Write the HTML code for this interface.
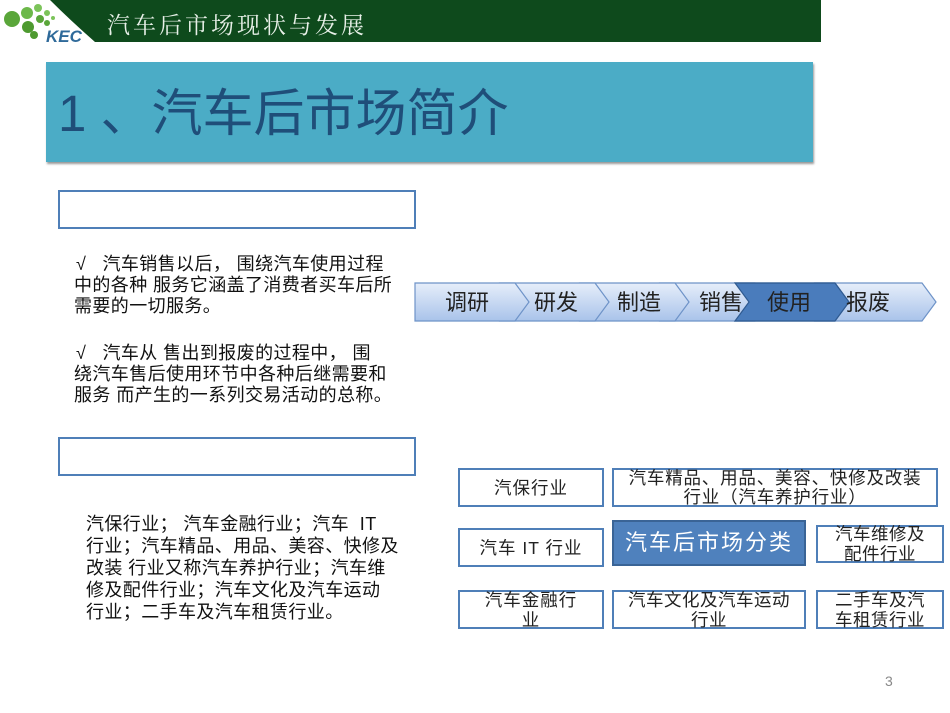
<!DOCTYPE html>
<html><head><meta charset="utf-8"><style>
*{margin:0;padding:0;box-sizing:border-box}
body{width:950px;height:713px;background:#fff;position:relative;overflow:hidden;font-family:"Liberation Sans","Noto Sans CJK SC",sans-serif}
.a{position:absolute;white-space:nowrap}
.t{font-size:18px;color:#111;line-height:21px;letter-spacing:0.4px}
.box{position:absolute;border:2px solid #4f7fb8;background:#fff;display:flex;align-items:center;justify-content:center;text-align:center;font-size:17.5px;line-height:20px;color:#222;letter-spacing:1px}
</style></head><body>
<div class="a" style="left:0;top:0;width:821px;height:42px;background:#0e4a1c"></div>
<svg class="a" style="left:0;top:0" width="100" height="46">
<path d="M0 0 H50 Q70 20 95 42 H0Z" fill="#fff"/>
<circle cx="12" cy="19" r="8" fill="#5aa63a"/><circle cx="27" cy="13" r="6" fill="#6cb84a"/><circle cx="28" cy="27" r="6" fill="#4e9a30"/>
<circle cx="38" cy="8" r="4" fill="#7cc45a"/><circle cx="40" cy="19" r="4" fill="#5aa63a"/><circle cx="34" cy="35" r="4" fill="#4e9a30"/>
<circle cx="47" cy="13" r="3" fill="#7cc45a"/><circle cx="47" cy="23" r="3" fill="#5aa63a"/><circle cx="53" cy="18" r="2" fill="#7cc45a"/>
<text x="46" y="42" font-size="17" font-style="italic" font-weight="bold" fill="#2f6a9a" font-family="Liberation Sans">KEC</text>
</svg>
<div class="a" style="left:107px;top:7px;font-size:23px;color:#e8f0e8;letter-spacing:3px;font-family:'Liberation Sans','Noto Serif CJK SC',serif">汽车后市场现状与发展</div>
<div class="a" style="left:46px;top:62px;width:767px;height:100px;background:#4bacc6;box-shadow:1px 2px 2px #999"></div>
<div class="a" style="left:58px;top:83px;font-size:51px;color:#1f4e79;line-height:62px">1 、汽车后市场简介</div>
<div class="a" style="left:58px;top:190px;width:358px;height:39px;border:2px solid #4f7fb8"></div>
<div class="a" style="left:58px;top:437px;width:358px;height:39px;border:2px solid #4f7fb8"></div>
<div class="a t" style="left:76px;top:254px">√&nbsp;&nbsp;&nbsp;汽车销售以后，&nbsp;围绕汽车使用过程</div>
<div class="a t" style="left:74px;top:275px">中的各种&nbsp;服务它涵盖了消费者买车后所</div>
<div class="a t" style="left:74px;top:296px">需要的一切服务。</div>
<div class="a t" style="left:76px;top:343px">√&nbsp;&nbsp;&nbsp;汽车从&nbsp;售出到报废的过程中，&nbsp;围</div>
<div class="a t" style="left:74px;top:364px">绕汽车售后使用环节中各种后继需要和</div>
<div class="a t" style="left:74px;top:385px">服务&nbsp;而产生的一系列交易活动的总称。</div>
<div class="a t" style="left:86px;top:513px;line-height:22px">汽保行业；&nbsp;汽车金融行业；汽车&nbsp;&nbsp;IT<br>行业；汽车精品、用品、美容、快修及<br>改装&nbsp;行业又称汽车养护行业；汽车维<br>修及配件行业；汽车文化及汽车运动<br>行业；二手车及汽车租赁行业。</div>
<svg class="a" style="left:410px;top:278px" width="535" height="50">
<defs><linearGradient id="g" x1="0" y1="0" x2="0" y2="1"><stop offset="0" stop-color="#e6eefa"/><stop offset="1" stop-color="#a9c3ea"/></linearGradient></defs>
<g stroke="#6e93c8" stroke-width="1.2" fill="url(#g)">
<polygon points="405,5 512,5 526,24 512,43 405,43 419,24"/>
<polygon points="325,5 425,5 439,24 425,43 325,43 339,24"/>
<polygon points="250,5 345,5 359,24 345,43 250,43 264,24"/>
<polygon points="170,5 265,5 279,24 265,43 170,43 184,24"/>
<polygon points="90,5 185,5 199,24 185,43 90,43 104,24"/>
<polygon points="5,5 105,5 119,24 105,43 5,43"/>
<polygon points="325,5 425,5 439,24 425,43 325,43 339,24" fill="#4a7cbc" stroke="#2f5a90"/>
</g>
<g font-size="22" fill="#222" font-family="Liberation Sans,Noto Sans CJK SC,sans-serif">
<text x="35" y="32">调研</text><text x="124" y="32">研发</text><text x="207" y="32">制造</text><text x="289" y="32">销售</text><text x="357" y="32">使用</text><text x="436" y="32">报废</text></g>
</svg>
<div class="box" style="left:458px;top:468px;width:146px;height:39px">汽保行业</div>
<div class="box" style="left:612px;top:468px;width:326px;height:39px;line-height:19px;letter-spacing:0.8px">汽车精品、用品、美容、快修及改装<br>行业（汽车养护行业）</div>
<div class="box" style="left:458px;top:528px;width:146px;height:39px">汽车 IT 行业</div>
<div class="box" style="left:612px;top:520px;width:194px;height:46px;background:#4f81bd;border-color:#3a6496;color:#fff;font-size:22px;letter-spacing:2px">汽车后市场分类</div>
<div class="box" style="left:816px;top:525px;width:128px;height:38px;letter-spacing:0.5px">汽车维修及<br>配件行业</div>
<div class="box" style="left:458px;top:590px;width:146px;height:39px">汽车金融行<br>业</div>
<div class="box" style="left:612px;top:590px;width:194px;height:39px;letter-spacing:0.5px">汽车文化及汽车运动<br>行业</div>
<div class="box" style="left:816px;top:590px;width:128px;height:39px;letter-spacing:0.5px">二手车及汽<br>车租赁行业</div>
<div class="a" style="left:885px;top:673px;font-size:14px;color:#888">3</div>
</body></html>
